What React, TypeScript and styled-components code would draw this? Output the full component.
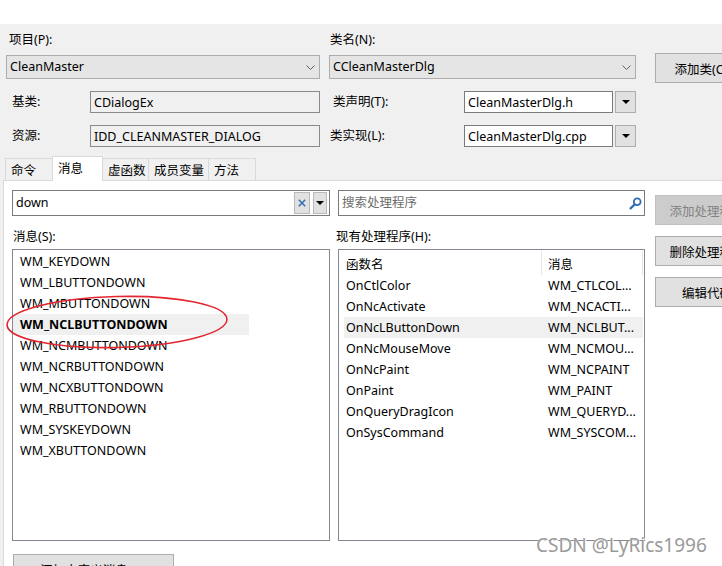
import React from "react";
import styled, { createGlobalStyle } from "styled-components";

const GlobalStyle = createGlobalStyle`
  html, body { margin: 0; padding: 0; background: #f0f0f0; }
  body {
    font-family: "Noto Sans", "Noto Sans CJK SC", sans-serif;
    font-size: 12.5px;
    color: #000;
  }
  * { box-sizing: border-box; }
`;

const Frame = styled.div`
  position: relative;
  width: 722px;
  height: 566px;
  overflow: hidden;
  background: #f0f0f0;
  display: flex;
  flex-direction: column;
`;

const TopBand = styled.div`
  flex: none;
  height: 24px;
  background: #fff;
`;

const Form = styled.div`
  flex: none;
  display: grid;
  grid-template-columns: 314px 307px 1fr;
  grid-template-rows: 31px 36px 34px 22px;
  column-gap: 9px;
  padding-left: 6px;
`;

type Place = { $col: number; $row: number };

const Label = styled.div<Place & { $pad?: number }>`
  grid-column: ${(p) => p.$col};
  grid-row: ${(p) => p.$row};
  align-self: center;
  line-height: 16px;
  padding-left: ${(p) => p.$pad ?? 0}px;
  white-space: nowrap;
`;

const Combo = styled.div<Place>`
  grid-column: ${(p) => p.$col};
  grid-row: ${(p) => p.$row};
  align-self: start;
  height: 24px;
  display: flex;
  align-items: center;
  justify-content: space-between;
  padding: 0 4px 0 3px;
  background: #e5e5e5;
  border: 1px solid #adadad;
  line-height: 16px;
`;

const Button = styled.div<{ $w?: number; $disabled?: boolean }>`
  flex: none;
  width: ${(p) => p.$w ?? 104}px;
  height: 30px;
  display: flex;
  align-items: center;
  justify-content: center;
  white-space: nowrap;
  background: ${(p) => (p.$disabled ? "#cccccc" : "#e1e1e1")};
  border: 1px solid ${(p) => (p.$disabled ? "#bfbfbf" : "#adadad")};
  color: ${(p) => (p.$disabled ? "#838383" : "#000")};
`;

const TopButton = styled(Button)`
  grid-column: 3;
  grid-row: 2 / span 2;
  align-self: start;
  margin-top: -2px;
  margin-left: 10px;
`;

const FieldRow = styled.div<Place & { $labelW: number; $pad: number }>`
  grid-column: ${(p) => p.$col};
  grid-row: ${(p) => p.$row};
  align-self: start;
  display: grid;
  grid-template-columns: ${(p) => p.$labelW}px 1fr auto;
  align-items: center;
  height: 22px;
  & > span {
    padding-left: ${(p) => p.$pad}px;
    white-space: nowrap;
    line-height: 16px;
  }
`;

const TextBox = styled.div<{ $readonly?: boolean }>`
  height: 22px;
  display: flex;
  align-items: center;
  padding-left: 3px;
  background: ${(p) => (p.$readonly ? "#f0f0f0" : "#fff")};
  border: 1px solid ${(p) => (p.$readonly ? "#8a8a8a" : "#7a7a7a")};
  white-space: nowrap;
  overflow: hidden;
`;

const DropButton = styled.div`
  width: 21px;
  height: 22px;
  margin-left: 2px;
  display: flex;
  align-items: center;
  justify-content: center;
  background: #e1e1e1;
  border: 1px solid #adadad;
`;

const TabStrip = styled.div`
  flex: none;
  display: flex;
  align-items: flex-end;
  height: 24px;
  margin-top: 9px;
  padding-left: 5px;
`;

const Tab = styled.div<{ $w: number; $active?: boolean }>`
  position: relative;
  z-index: ${(p) => (p.$active ? 2 : 1)};
  width: ${(p) => p.$w}px;
  height: ${(p) => (p.$active ? 25 : 22)}px;
  margin-right: -1px;
  margin-bottom: ${(p) => (p.$active ? -1 : 0)}px;
  padding: 0 0 ${(p) => (p.$active ? 3 : 0)}px 5px;
  display: flex;
  align-items: center;
  white-space: nowrap;
  background: ${(p) => (p.$active ? "#fff" : "#f0f0f0")};
  border: 1px solid #d9d9d9;
  border-bottom: none;
`;

const TabPage = styled.div`
  flex: 1;
  display: flex;
  margin-left: 3px;
  padding-left: 8px;
  background: #fff;
  border-top: 1px solid #d9d9d9;
  border-left: 1px solid #d9d9d9;
`;

const Column = styled.div<{ $w: number; $ml?: number }>`
  flex: none;
  width: ${(p) => p.$w}px;
  margin-left: ${(p) => p.$ml ?? 0}px;
  padding-top: 9px;
  display: flex;
  flex-direction: column;
`;

const ButtonColumn = styled.div`
  flex: none;
  margin-left: 10px;
  padding-top: 14px;
  display: flex;
  flex-direction: column;
  gap: 11px;
`;

const SearchBox = styled.div`
  flex: none;
  height: 26px;
  display: flex;
  align-items: center;
  padding: 0 2px 0 3px;
  background: #fff;
  border: 1px solid #7a7a7a;
`;

const SearchText = styled.span<{ $placeholder?: boolean }>`
  flex: 1;
  line-height: 16px;
  color: ${(p) => (p.$placeholder ? "#6d6d6d" : "#000")};
`;

const MiniButton = styled.div<{ $w: number }>`
  width: ${(p) => p.$w}px;
  height: 22px;
  margin-left: 3px;
  display: flex;
  align-items: center;
  justify-content: center;
  background: #e1e1e1;
  border: 1px solid #b9b9b9;
`;

const SectionLabel = styled.div<{ $ml?: number }>`
  flex: none;
  margin-top: 13px;
  margin-left: ${(p) => p.$ml ?? 0}px;
  line-height: 16px;
  white-space: nowrap;
`;

const ListBox = styled.div`
  flex: none;
  margin-top: 4px;
  height: 292px;
  padding-top: 1px;
  background: #fff;
  border: 1px solid #828790;
  overflow: hidden;
`;

const MessageItem = styled.div<{ $selected?: boolean }>`
  width: 236px;
  height: 21px;
  padding-left: 7px;
  display: flex;
  align-items: center;
  white-space: nowrap;
  font-weight: ${(p) => (p.$selected ? 700 : 400)};
  background: ${(p) => (p.$selected ? "#f0f0f0" : "transparent")};
`;

const HandlerList = styled.div`
  flex: none;
  margin-top: 4px;
  height: 292px;
  padding: 0 1px 0 5px;
  background: #fff;
  border: 1px solid #828790;
  overflow: hidden;
`;

const HandlerRow = styled.div<{ $header?: boolean; $selected?: boolean }>`
  display: grid;
  grid-template-columns: 198px 1fr;
  height: ${(p) => (p.$header ? 25 : 21)}px;
  background: ${(p) => (p.$selected ? "#f0f0f0" : "transparent")};
`;

const Cell = styled.div<{ $pad: number; $divider?: boolean }>`
  display: flex;
  align-items: center;
  padding-left: ${(p) => p.$pad}px;
  white-space: nowrap;
  overflow: hidden;
  border-right: ${(p) => (p.$divider ? "1px solid #e5e5e5" : "none")};
  margin: ${(p) => (p.$divider ? "1px 0 0" : "0")};
`;

const BottomButton = styled(Button)`
  margin-top: 13px;
  margin-left: 1px;
`;

const Ellipse = styled.svg`
  position: absolute;
  left: 3px;
  top: 293px;
  width: 228px;
  height: 60px;
  overflow: visible;
  pointer-events: none;
`;

const Watermark = styled.div`
  position: absolute;
  left: 536px;
  top: 533px;
  font-family: "Noto Sans", sans-serif;
  font-size: 19px;
  line-height: 24px;
  color: #9a9a9a;
  text-shadow: 0 0 1px #fff, 1px 1px 0 #fff;
  white-space: nowrap;
`;

const Chevron = () => (
  <svg width="9" height="5" viewBox="0 0 9 5">
    <polyline points="0.5,0.5 4.5,4.5 8.5,0.5" fill="none" stroke="#606060" strokeWidth="1" />
  </svg>
);

const Triangle = () => (
  <svg width="8" height="4" viewBox="0 0 8 4">
    <polygon points="0,0 8,0 4,4" fill="#000" />
  </svg>
);

const ClearIcon = () => (
  <svg width="8" height="8" viewBox="0 0 8 8">
    <path d="M0.8 0.8 L7.2 7.2 M7.2 0.8 L0.8 7.2" stroke="#3a6fb5" strokeWidth="1.6" />
  </svg>
);

const Magnifier = () => (
  <svg width="13" height="13" viewBox="0 0 13 13">
    <circle cx="8.2" cy="4.8" r="3.4" fill="none" stroke="#2f6db3" strokeWidth="1.8" />
    <path d="M5.8 7.2 L1.6 11.4" stroke="#2f6db3" strokeWidth="2.2" strokeLinecap="round" />
  </svg>
);

const messages = [
  "WM_KEYDOWN",
  "WM_LBUTTONDOWN",
  "WM_MBUTTONDOWN",
  "WM_NCLBUTTONDOWN",
  "WM_NCMBUTTONDOWN",
  "WM_NCRBUTTONDOWN",
  "WM_NCXBUTTONDOWN",
  "WM_RBUTTONDOWN",
  "WM_SYSKEYDOWN",
  "WM_XBUTTONDOWN",
];

const handlers: [string, string][] = [
  ["OnCtlColor", "WM_CTLCOL..."],
  ["OnNcActivate", "WM_NCACTI..."],
  ["OnNcLButtonDown", "WM_NCLBUT..."],
  ["OnNcMouseMove", "WM_NCMOU..."],
  ["OnNcPaint", "WM_NCPAINT"],
  ["OnPaint", "WM_PAINT"],
  ["OnQueryDragIcon", "WM_QUERYD..."],
  ["OnSysCommand", "WM_SYSCOM..."],
];

const tabs: { label: string; w: number; active?: boolean }[] = [
  { label: "命令", w: 48 },
  { label: "消息", w: 51, active: true },
  { label: "虚函数", w: 47 },
  { label: "成员变量", w: 61 },
  { label: "方法", w: 48 },
];

export default function App() {
  return (
    <Frame>
      <GlobalStyle />
      <TopBand />
      <Form>
        <Label $col={1} $row={1} $pad={3}>
          项目(P):
        </Label>
        <Label $col={2} $row={1} $pad={1}>
          类名(N):
        </Label>
        <Combo $col={1} $row={2}>
          <span>CleanMaster</span>
          <Chevron />
        </Combo>
        <Combo $col={2} $row={2}>
          <span>CCleanMasterDlg</span>
          <Chevron />
        </Combo>
        <TopButton $w={92}>添加类(C)</TopButton>

        <FieldRow $col={1} $row={3} $labelW={84} $pad={6}>
          <span>基类:</span>
          <TextBox $readonly>CDialogEx</TextBox>
        </FieldRow>
        <FieldRow $col={2} $row={3} $labelW={135} $pad={4}>
          <span>类声明(T):</span>
          <TextBox>CleanMasterDlg.h</TextBox>
          <DropButton>
            <Triangle />
          </DropButton>
        </FieldRow>
        <FieldRow $col={1} $row={4} $labelW={84} $pad={6}>
          <span>资源:</span>
          <TextBox $readonly>IDD_CLEANMASTER_DIALOG</TextBox>
        </FieldRow>
        <FieldRow $col={2} $row={4} $labelW={135} $pad={1}>
          <span>类实现(L):</span>
          <TextBox>CleanMasterDlg.cpp</TextBox>
          <DropButton>
            <Triangle />
          </DropButton>
        </FieldRow>
      </Form>

      <TabStrip>
        {tabs.map((t) => (
          <Tab key={t.label} $w={t.w} $active={t.active}>
            {t.label}
          </Tab>
        ))}
      </TabStrip>

      <TabPage>
        <Column $w={318}>
          <SearchBox>
            <SearchText>down</SearchText>
            <MiniButton $w={16}>
              <ClearIcon />
            </MiniButton>
            <MiniButton $w={14}>
              <Triangle />
            </MiniButton>
          </SearchBox>
          <SectionLabel $ml={1}>消息(S):</SectionLabel>
          <ListBox>
            {messages.map((m) => (
              <MessageItem key={m} $selected={m === "WM_NCLBUTTONDOWN"}>
                {m}
              </MessageItem>
            ))}
          </ListBox>
          <BottomButton $w={161}>添加自定义消息(M)</BottomButton>
        </Column>

        <Column $w={307} $ml={8}>
          <SearchBox>
            <SearchText $placeholder>搜索处理程序</SearchText>
            <Magnifier />
          </SearchBox>
          <SectionLabel $ml={-2}>现有处理程序(H):</SectionLabel>
          <HandlerList>
            <HandlerRow $header>
              <Cell $pad={2} $divider>
                函数名
              </Cell>
              <Cell $pad={6} $divider>
                消息
              </Cell>
            </HandlerRow>
            {handlers.map(([fn, msg]) => (
              <HandlerRow key={fn} $selected={fn === "OnNcLButtonDown"}>
                <Cell $pad={2}>{fn}</Cell>
                <Cell $pad={6}>{msg}</Cell>
              </HandlerRow>
            ))}
          </HandlerList>
        </Column>

        <ButtonColumn>
          <Button $disabled>添加处理程序</Button>
          <Button>删除处理程序</Button>
          <Button>编辑代码</Button>
        </ButtonColumn>
      </TabPage>

      <Ellipse viewBox="0 0 228 60">
        <ellipse
          cx="114"
          cy="29"
          rx="110"
          ry="25.5"
          fill="none"
          stroke="#e3262f"
          strokeWidth="1.6"
          transform="rotate(-1.5 114 29)"
        />
      </Ellipse>
      <Watermark>CSDN @LyRics1996</Watermark>
    </Frame>
  );
}
